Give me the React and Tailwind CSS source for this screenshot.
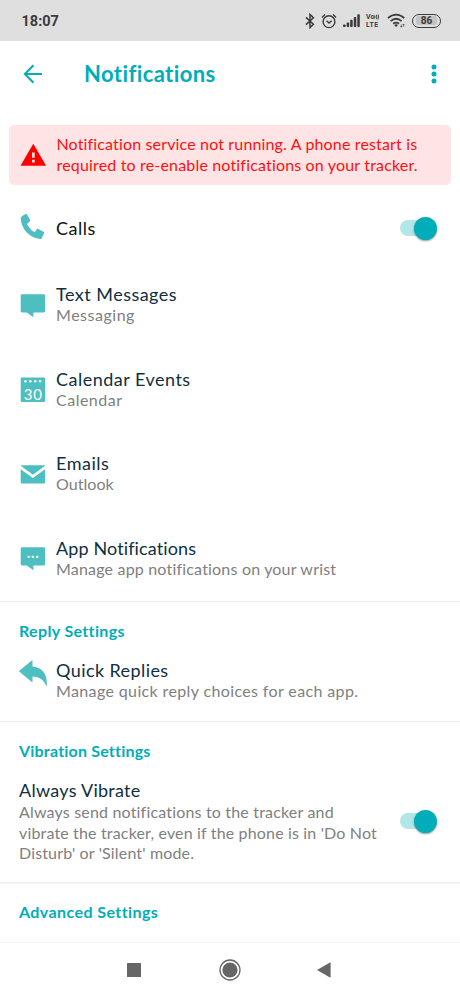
import { useState } from "react";

function PhoneIcon() {
  return (
    <svg viewBox="0 0 28 30" className="h-[30px] w-7 shrink-0 fill-[#4dbfc0]">
      <path d="M2.4 3.9C2.9 3 5.6 1.5 7 1.1c.5-.1.8 0 1.1.5l3 5.3c.3.6.2 1-.2 1.4L8 10.9c1.7 3.6 4.2 6.5 7.700 8.400l2.100-3c.4-.5.8-.6 1.300-.4l5.500 2.800c.6.3.7.7.5 1.200-.5 1.500-1.700 4.200-2.600 5.500-.3.500-.7.700-1.300.6C11.200 25.200 2.100 16.500 1.700 5.300c0-.5.3-1 .7-1.400z" />
    </svg>
  );
}

function MessageIcon({ dots }) {
  return (
    <svg viewBox="0 0 28 30" className="h-[30px] w-7 shrink-0 fill-[#4dbfc0]">
      <path d="M3 4.200h21.800a1.300 1.300 0 0 1 1.300 1.300v15.600a1.300 1.300 0 0 1-1.300 1.300H14.400v4.800L7.800 22.400H3a1.300 1.300 0 0 1-1.300-1.300V5.500A1.300 1.300 0 0 1 3 4.200z" />
      {dots && (
        <g fill="white">
          <rect x="8.6" y="12.7" width="2.2" height="2.2" rx=".6" />
          <rect x="12.8" y="12.7" width="2.2" height="2.2" rx=".6" />
          <rect x="17" y="12.7" width="2.2" height="2.2" rx=".6" />
        </g>
      )}
    </svg>
  );
}

function CalendarIcon() {
  return (
    <svg viewBox="0 0 28 30" className="h-[30px] w-7 shrink-0 fill-[#4dbfc0]">
      <rect x="1.7" y="3.5" width="24.4" height="24.6" rx="1.3" />
      <g fill="white">
        <circle cx="6.4" cy="7.3" r="1.3" />
        <circle cx="11.3" cy="7.3" r="1.3" />
        <circle cx="16.2" cy="7.3" r="1.3" />
        <circle cx="21.1" cy="7.3" r="1.3" />
        <text
          x="4.8"
          y="26"
          textLength="18.2"
          className="font-['Lato',sans-serif] text-[15px]"
        >
          30
        </text>
      </g>
    </svg>
  );
}

function MailIcon() {
  return (
    <svg viewBox="0 0 28 30" className="h-[30px] w-7 shrink-0 fill-[#4dbfc0]">
      <path d="M2.5 6.200h22.800c.6 0 .8.500.4.900L13.900 15.800 2.100 7.100c-.4-.4-.2-.9.400-.9z" />
      <path d="M1.700 10.200l12.200 8.900 12.200-8.900v13a1.300 1.300 0 0 1-1.300 1.300H3a1.300 1.300 0 0 1-1.300-1.300z" />
    </svg>
  );
}

function ReplyIcon() {
  return (
    <svg viewBox="0 0 28 30" className="h-[30px] w-7 shrink-0 fill-[#4dbfc0]">
      <path d="M.3 11.700L12.500 1.800c.5-.4 1-.2 1 .4v5.200C23 8 29 15 27.600 27.600 24.500 20.300 20.500 17.600 13.500 17.400v5c0 .6-.5.800-1 .4L.3 12.500c-.3-.3-.3-.6 0-.8z" />
    </svg>
  );
}

function StatusIcons() {
  return (
    <div className="flex items-center text-[#3b3b3b]">
      {/* bluetooth */}
      <svg viewBox="0 0 10 16" className="mr-[6px] h-4 w-[10px] fill-none stroke-current stroke-[1.5]">
        <path d="M1 4.400l7.400 6.900L5 14.600V1.400l3.400 3.300L1 11.600" />
      </svg>
      {/* alarm */}
      <svg viewBox="0 0 16 16" className="mr-[6px] h-4 w-4 fill-none stroke-current stroke-[1.4]">
        <circle cx="8" cy="8.7" r="5.9" />
        <path d="M5.500 7.800L8 10l2.700-2.200M1 4.400l3-2.900M15 4.400l-3-2.900" />
      </svg>
      {/* signal */}
      <svg viewBox="0 0 17 14" className="mr-[6px] h-[14px] w-[17px] fill-current">
        <rect x="0" y="10.5" width="2.7" height="2.5" rx=".8" />
        <rect x="3.7" y="8.5" width="2.5" height="4.5" rx=".8" />
        <rect x="7.2" y="5.8" width="2.5" height="7.2" rx=".8" />
        <rect x="10.8" y="3" width="2.5" height="10" rx=".8" />
        <rect x="14.3" y=".3" width="2.5" height="12.7" rx=".8" />
      </svg>
      <div className="mr-[7px] w-[14px] text-[7px] leading-[8px] font-bold">
        <div className="flex items-center">
          Vo
          <svg viewBox="0 0 5 6" className="h-[6px] w-[5px] fill-none stroke-current stroke-[.9]">
            <path d="M.6 1.500q1 1.500 0 3M2.300.8q1.200 2.200 0 4.400M4 .4q1 2.600 0 5.200" />
          </svg>
        </div>
        <div className="tracking-[0.5px]">LTE</div>
      </div>
      {/* wifi */}
      <svg viewBox="0 0 19 15" className="mr-[6px] h-[15px] w-[19px] fill-none stroke-current stroke-[1.8]">
        <path d="M.9 5.100q8.200-7 16.400 0M3.600 8.100q5.500-4.600 11 0M6.200 10.800q2.900-2.400 5.800 0" />
        <path d="M7.200 12q1.900-1.500 3.800 0l-1.900 2z" className="fill-current stroke-none" />
        <path d="M14.300 11.500v2.700M16.600 11v2.700M13.500 13.200l.8 1 .8-1M15.800 12l.8-1 .8 1" className="stroke-[.7]" />
      </svg>
      <div className="flex h-[14px] w-[29px] items-center justify-center rounded-full border-[1.5px] border-current">
        <span className="h-[9px] w-[21px] rounded-[3px] bg-[#c4c4c4] text-center text-[10px] leading-[9.5px] font-bold">
          86
        </span>
      </div>
    </div>
  );
}

function Toggle({ checked, onChange, label }) {
  return (
    <button
      role="switch"
      aria-checked={checked}
      aria-label={label}
      onClick={onChange}
      className={`flex h-4 w-[37px] shrink-0 items-center ${checked ? "justify-end" : "justify-start"}`}
    >
      <span
        className={`flex h-4 w-[33px] items-center rounded-full ${checked ? "mr-1 justify-end bg-[#b2e7e9]" : "bg-gray-300"}`}
      >
        <span
          className={`h-[23px] w-[23px] shrink-0 rounded-full shadow-[0_1px_2px_rgba(0,0,0,0.4)] ${checked ? "-mr-1 bg-[#00adb9]" : "bg-white"}`}
        />
      </span>
    </button>
  );
}

function RowText({ title, subtitle, titleClass, subtitleClass }) {
  return (
    <div className="pb-[0.2px] whitespace-nowrap">
      <p className={`text-[18px] leading-[22px] text-[#0f2f40] ${titleClass}`}>{title}</p>
      <p className={`text-[16px] leading-[20.5px] text-[#808080] ${subtitleClass}`}>{subtitle}</p>
    </div>
  );
}

function SectionHeader({ children, className }) {
  return (
    <h2 className={`text-[16px] leading-[21px] font-bold text-[#00adb9] ${className}`}>
      {children}
    </h2>
  );
}

const rows = [
  {
    icon: <MessageIcon />,
    title: "Text Messages",
    subtitle: "Messaging",
    titleClass: "tracking-[0.48px]",
    subtitleClass: "tracking-[0.52px]",
  },
  {
    icon: <CalendarIcon />,
    title: "Calendar Events",
    subtitle: "Calendar",
    titleClass: "tracking-[0.49px]",
    subtitleClass: "tracking-[0.5px]",
  },
  {
    icon: <MailIcon />,
    title: "Emails",
    subtitle: "Outlook",
    titleClass: "tracking-[0.5px]",
    subtitleClass: "tracking-[0.05px]",
  },
  {
    icon: <MessageIcon dots />,
    title: "App Notifications",
    subtitle: "Manage app notifications on your wrist",
    titleClass: "tracking-[0.12px]",
    subtitleClass: "tracking-[0.19px]",
  },
];

export default function App() {
  const [calls, setCalls] = useState(true);
  const [vibrate, setVibrate] = useState(true);

  return (
    <div className="flex h-[998px] w-[460px] flex-col overflow-hidden bg-white font-['Lato',sans-serif]">
      <div className="flex h-[41px] shrink-0 items-center justify-between bg-[#dfdfdf] pr-[19px] pl-[21.5px] font-['Roboto',sans-serif]">
        <span className="pt-[2px] text-[14.5px] font-bold text-[#3b3b3b]">18:07</span>
        <StatusIcons />
      </div>

      <header className="flex h-[66px] shrink-0 items-center pr-[22px] pl-[23px] text-[#00adb9]">
        <button aria-label="Back">
          <svg viewBox="0 0 20 20" className="h-5 w-5 fill-none stroke-current stroke-2">
            <path d="M10.500 1.200L1.800 10l8.700 8.800M1.800 10H19" />
          </svg>
        </button>
        <h1 className="ml-[41px] grow pb-[2px] text-[22px] font-bold tracking-[0.4px]">Notifications</h1>
        <button aria-label="More">
          <svg viewBox="0 0 8 20" className="h-5 w-2 fill-current">
            <circle cx="4" cy="3" r="2.5" />
            <circle cx="4" cy="10" r="2.5" />
            <circle cx="4" cy="17" r="2.5" />
          </svg>
        </button>
      </header>

      <main className="grow pt-[18px]">
        <div className="mx-[9px] flex h-[59.5px] items-center rounded-[5px] bg-[#ffe4e5] pl-[10.5px]">
          <svg viewBox="0 0 27 24" className="h-6 w-[27px] fill-[#ff0000]">
            <path d="M13.300.7L26.100 22.800H.5z" />
            <path d="M12 9.500h2.700v5.300H12zM12 16.800h2.700v2.600H12z" fill="#ffe4e5" />
          </svg>
          <div className="ml-[10px] text-[16px] leading-[20.5px] whitespace-nowrap text-[#ff0f0f]">
            <p className="tracking-[0.15px]">Notification service not running. A phone restart is</p>
            <p className="tracking-[0.17px]">required to re-enable notifications on your tracker.</p>
          </div>
        </div>

        <div className="mt-[9px] flex h-[69px] items-center pr-[23px] pl-[19px]">
          <PhoneIcon />
          <span className="ml-[9px] grow text-[18px] tracking-[0.5px] text-[#111]">Calls</span>
          <Toggle checked={calls} onChange={() => setCalls(!calls)} label="Calls" />
        </div>

        {rows.map((row) => (
          <div key={row.title} className="flex h-[84.5px] items-center gap-[9px] pl-[19px]">
            {row.icon}
            <RowText {...row} />
          </div>
        ))}

        <section className="h-[120.5px] border-t-[1.5px] border-[#ececec] pt-[18px] pl-[19px]">
          <SectionHeader className="tracking-[0.35px]">Reply Settings</SectionHeader>
          <div className="mt-[18.5px] flex gap-[9px]">
            <ReplyIcon />
            <RowText
              title="Quick Replies"
              subtitle="Manage quick reply choices for each app."
              titleClass="tracking-[0.42px]"
              subtitleClass="tracking-[0.37px]"
            />
          </div>
        </section>

        <section className="h-[161px] border-t-[1.5px] border-[#ececec] pt-[18px] pr-[23px] pl-[19px]">
          <SectionHeader className="tracking-[0.2px]">Vibration Settings</SectionHeader>
          <div className="mt-[18px] flex items-center justify-between">
            <div className="whitespace-nowrap">
              <p className="text-[18px] leading-[22px] tracking-[0.27px] text-[#0f2f40]">Always Vibrate</p>
              <div className="pt-px text-[16px] leading-[20.5px] text-[#808080]">
                <p className="tracking-[0.18px]">Always send notifications to the tracker and</p>
                <p className="tracking-[0.16px]">vibrate the tracker, even if the phone is in 'Do Not</p>
                <p className="tracking-[0.15px]">Disturb' or 'Silent' mode.</p>
              </div>
            </div>
            <Toggle checked={vibrate} onChange={() => setVibrate(!vibrate)} label="Always Vibrate" />
          </div>
        </section>

        <section className="border-t-2 border-[#f2f2f2] pt-[17px] pl-[19px]">
          <SectionHeader className="tracking-[0.42px]">Advanced Settings</SectionHeader>
        </section>
      </main>

      <nav className="flex h-[56px] shrink-0 items-center border-t border-[#f2f2f2] pb-px pl-[127px] text-[#666]">
        <svg viewBox="0 0 14 14" className="h-[14px] w-[14px] fill-current">
          <rect width="14" height="14" rx=".5" />
        </svg>
        <svg viewBox="0 0 22 22" className="ml-[78px] h-[22px] w-[22px] fill-current">
          <circle cx="11" cy="11" r="10" className="fill-none stroke-current stroke-[1.3]" />
          <circle cx="11" cy="11" r="7.6" />
        </svg>
        <svg viewBox="0 0 14 16" className="ml-[76px] h-4 w-[14px] fill-current">
          <path d="M0 8L13 .5c.3-.1.6 0 .6.400v14.200c0 .4-.3.500-.6.400z" />
        </svg>
      </nav>
    </div>
  );
}
